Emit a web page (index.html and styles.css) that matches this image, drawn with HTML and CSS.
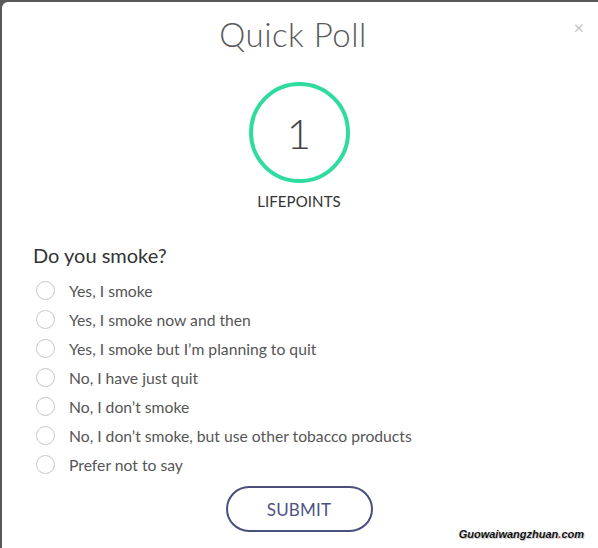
FILE: index.html
```html
<!DOCTYPE html>
<html>
<head>
<meta charset="utf-8">
<link rel="stylesheet" href="styles.css">
</head>
<body>
<div class="frame">
  <div class="modal">
    <button class="close">&times;</button>
    <h1 class="title">Quick Poll</h1>
    <div class="points">
      <div class="ring">1</div>
      <div class="label">LIFEPOINTS</div>
    </div>
    <h2 class="question">Do you smoke?</h2>
    <ul class="options">
      <li><span class="radio"></span>Yes, I smoke</li>
      <li><span class="radio"></span>Yes, I smoke now and then</li>
      <li><span class="radio"></span>Yes, I smoke but I’m planning to quit</li>
      <li><span class="radio"></span>No, I have just quit</li>
      <li><span class="radio"></span>No, I don’t smoke</li>
      <li><span class="radio"></span>No, I don’t smoke, but use other tobacco products</li>
      <li><span class="radio"></span>Prefer not to say</li>
    </ul>
    <div class="actions">
      <button class="submit">SUBMIT</button>
    </div>
    <div class="watermark">Guowaiwangzhuan<span class="dot">.</span>com</div>
  </div>
</div>
</body>
</html>
```
FILE: styles.css
```css
html, body {
  margin: 0;
  padding: 0;
  background: #5a5a5a;
}
body {
  width: 598px;
  height: 548px;
  overflow: hidden;
  font-family: Lato, "Open Sans", sans-serif;
}
.frame {
  padding: 2px 0 0 2px;
  height: 546px;
}
.modal {
  position: relative;
  background: #fff;
  height: 100%;
  border-top-left-radius: 6px;
  box-sizing: border-box;
  padding-top: 12px;
}
.close {
  position: absolute;
  top: 16px;
  right: 14px;
  border: none;
  background: none;
  color: #c4c4c4;
  font-size: 18px;
  font-family: Lato, sans-serif;
  padding: 0;
  line-height: 1;
}
.title {
  margin: 0;
  text-align: center;
  font-weight: 300;
  font-size: 33px;
  line-height: 40px;
  color: #595959;
  letter-spacing: 0.5px;
  padding-right: 14px;
}
.points {
  display: flex;
  flex-direction: column;
  align-items: center;
  margin-top: 28px;
  padding-right: 2px;
}
.ring {
  width: 93px;
  height: 93px;
  border: 4px solid #2fdc9e;
  border-radius: 50%;
  display: flex;
  align-items: center;
  justify-content: center;
  font-size: 42px;
  font-weight: 300;
  color: #444;
}
.label {
  margin-top: 9px;
  font-size: 15px;
  color: #333;
  letter-spacing: 0.1px;
}
.question {
  margin: 33px 0 0 31px;
  font-weight: 400;
  font-size: 20px;
  line-height: 24px;
  color: #333;
}
.options {
  list-style: none;
  margin: 9px 0 0 34px;
  padding: 0;
}
.options li {
  display: flex;
  align-items: center;
  height: 29px;
  font-size: 15.7px;
  color: #555;
}
.radio {
  width: 17px;
  height: 17px;
  border: 1.5px solid #c8c8c8;
  border-radius: 50%;
  margin-right: 14px;
}
.actions {
  display: flex;
  justify-content: center;
  margin-top: 7px;
  padding-right: 2px;
}
.submit {
  width: 147px;
  height: 46px;
  border: 2px solid #4a4f7c;
  border-radius: 23px;
  background: #fff;
  color: #4d5384;
  font-family: Lato, sans-serif;
  font-size: 17px;
  letter-spacing: 0.2px;
}
.watermark {
  position: absolute;
  right: 14px;
  bottom: 8px;
  font-family: "Liberation Sans", sans-serif;
  font-weight: bold;
  font-style: italic;
  font-size: 11px;
  color: #111;
  text-shadow: 1px 1px 0 #ccc;
}
.dot {
  color: #c0392b;
}
```
